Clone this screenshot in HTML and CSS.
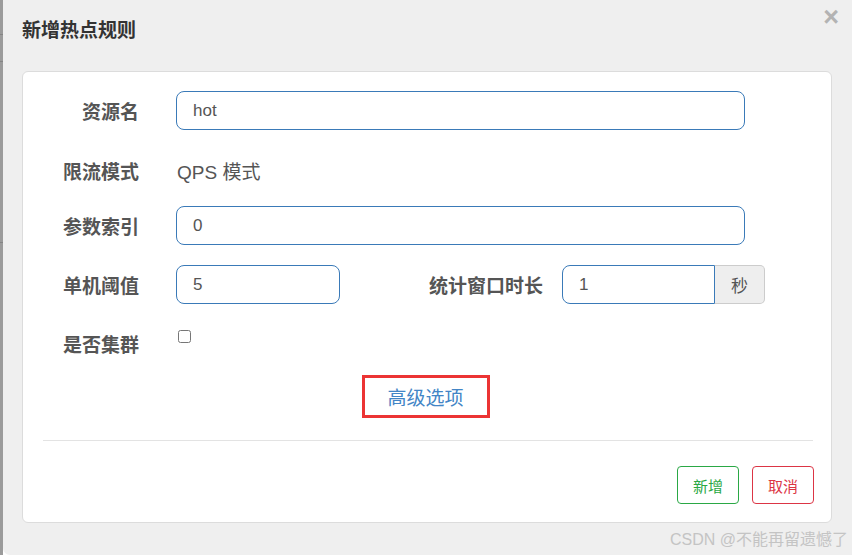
FILE: index.html
```html
<!DOCTYPE html>
<html lang="zh-CN">
<head>
    <meta charset="UTF-8">
    <meta name="viewport" content="width=device-width, initial-scale=1.0">
    <title>新增热点规则</title>
    <link rel="stylesheet" href="styles.css">
</head>
<body>
    <div class="backdrop"></div>
    <div class="modal">
        <div class="modal-header">
            <h4 class="modal-title">新增热点规则</h4>
            <span class="close">&times;</span>
        </div>

        <div class="panel">
            <form class="rule-form">
                <div class="form-row">
                    <label class="row-label">资源名</label>
                    <input type="text" class="field field-wide" value="hot">
                </div>
                <div class="form-row static-row">
                    <label class="row-label">限流模式</label>
                    <span class="static-text">QPS 模式</span>
                </div>
                <div class="form-row">
                    <label class="row-label">参数索引</label>
                    <input type="text" class="field field-wide" value="0">
                </div>
                <div class="form-row">
                    <label class="row-label">单机阈值</label>
                    <input type="text" class="field field-short" value="5">
                    <label class="row-label label-second">统计窗口时长</label>
                    <div class="input-group">
                        <input type="text" class="field field-group" value="1">
                        <span class="addon">秒</span>
                    </div>
                </div>
                <div class="form-row check-row">
                    <label class="row-label">是否集群</label>
                    <input type="checkbox" class="check">
                </div>
            </form>

            <div class="advanced">
                <a href="#" class="advanced-link">高级选项</a>
            </div>

            <hr class="divider">

            <div class="panel-footer">
                <button class="btn btn-add">新增</button>
                <button class="btn btn-cancel">取消</button>
            </div>
        </div>
    </div>

    <div class="watermark">CSDN @不能再留遗憾了</div>
</body>
</html>
```

FILE: styles.css
```css
/* General */
body {
    margin: 0;
    height: 555px;
    display: flex;
    overflow: hidden;
    background: #ffffff;
    font-family: "Liberation Sans", Arial, "Noto Sans CJK SC", sans-serif;
}

/* page behind the dialog */
.backdrop {
    width: 3px;
    flex-shrink: 0;
    background:
        linear-gradient(#858585, #858585) 0 34px / 3px 1px no-repeat,
        linear-gradient(#858585, #858585) 0 61px / 3px 1px no-repeat,
        linear-gradient(#858585, #858585) 0 242px / 3px 1px no-repeat,
        #9b9b9b;
}

/* Dialog */
.modal {
    flex: 1;
    background-color: #efefef;
    border-bottom-left-radius: 7px;
    position: relative;
}

.modal-header {
    height: 71px;
    padding-left: 19px;
    box-sizing: border-box;
}

.modal-title {
    margin: 0;
    padding-top: 19px;
    font-size: 19px;
    line-height: 24px;
    font-weight: bold;
    color: #333;
}

.close {
    position: absolute;
    top: 2px;
    right: 13px;
    font-size: 27px;
    font-weight: bold;
    line-height: 30px;
    color: #b3b3b3;
    cursor: pointer;
}

/* Panel */
.panel {
    margin: 0 20px 0 19px;
    background: #fff;
    border: 1px solid #dcdcdc;
    border-radius: 6px;
    padding: 19px 18px 18px 20px;
}

.rule-form {
    display: flex;
    flex-direction: column;
    gap: 20px;
}

.form-row {
    display: flex;
    align-items: center;
    height: 39px;
}

.row-label {
    width: 96px;
    margin-right: 37px;
    text-align: right;
    font-size: 19px;
    font-weight: bold;
    color: #555;
}

.label-second {
    width: 203px;
    margin-right: 19px;
}

.static-row {
    height: 36px;
    padding-top: 4px;
    box-sizing: border-box;
}

.static-text {
    font-size: 19px;
    color: #555;
    padding-left: 1px;
}

.check-row {
    height: 44px;
    align-items: flex-start;
}

.check-row .row-label {
    padding-top: 12px;
    line-height: 20px;
}

.check {
    width: 13px;
    height: 13px;
    margin: 6px 0 0 2px;
}

/* Inputs */
.field {
    height: 39px;
    box-sizing: border-box;
    border: 1px solid #3a7ab8;
    border-radius: 8px;
    padding: 0 16px;
    font-family: "Liberation Sans", Arial, sans-serif;
    font-size: 17px;
    color: #555;
    outline: none;
}

.field-wide {
    width: 569px;
}

.field-short {
    width: 164px;
}

.input-group {
    display: flex;
}

.field-group {
    width: 153px;
    border-radius: 8px 0 0 8px;
}

.addon {
    width: 50px;
    height: 39px;
    box-sizing: border-box;
    display: flex;
    justify-content: center;
    align-items: center;
    background: #eee;
    border: 1px solid #ccc;
    border-left: none;
    border-radius: 0 5px 5px 0;
    font-size: 17px;
    color: #555;
}

/* Advanced options */
.advanced {
    margin-top: 7px;
    display: flex;
    justify-content: center;
    padding-right: 5px;
}

.advanced-link {
    display: inline-flex;
    justify-content: center;
    align-items: center;
    width: 128px;
    height: 43px;
    box-sizing: border-box;
    border: 3px solid #ec3434;
    font-size: 19px;
    color: #4285c6;
    text-decoration: none;
}

.divider {
    margin: 22px 0 0;
    border: none;
    border-top: 1px solid #e3e3e3;
}

/* Footer buttons */
.panel-footer {
    margin-top: 25px;
    margin-right: -1px;
    display: flex;
    justify-content: flex-end;
    gap: 13px;
}

.btn {
    width: 62px;
    height: 38px;
    background: #fff;
    border-radius: 4px;
    font-family: "Liberation Sans", "Noto Sans CJK SC", sans-serif;
    font-size: 15px;
    cursor: pointer;
}

.btn-add {
    border: 1px solid #2aa845;
    color: #2aa845;
}

.btn-cancel {
    border: 1px solid #dc3545;
    color: #dc3545;
}

/* Watermark */
.watermark {
    position: absolute;
    right: 4px;
    bottom: 5px;
    font-size: 16px;
    color: #c4c4c4;
    font-family: "Liberation Sans", "Noto Sans CJK SC", sans-serif;
}
```
